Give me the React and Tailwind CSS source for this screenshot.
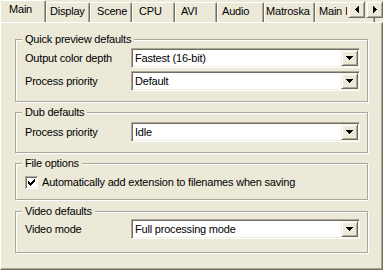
import React from 'react'

const font = "font-['Tahoma','Liberation_Sans',Arial,sans-serif] text-[11px] leading-[13px] tracking-[-0.2px] text-black"

const tabs = [
  { name: 'Main', w: 'w-[46px]', pl: 'pl-[8px]', selected: true },
  { name: 'Display', w: 'w-[44px]', pl: 'pl-[3px]' },
  { name: 'Scene', w: 'w-[42px]', pl: 'pl-[6px]' },
  { name: 'CPU', w: 'w-[43px]', pl: 'pl-[6px]' },
  { name: 'AVI', w: 'w-[42px]', pl: 'pl-[5px]' },
  { name: 'Audio', w: 'w-[47px]', pl: 'pl-[4px]' },
  { name: 'Matroska', w: 'w-[51px]', pl: 'pl-[1px]' },
  { name: 'Main I', w: 'w-[60px]', pl: 'pl-[3px]' },
]

const DownArrow = () => (
  <svg width="7" height="4" viewBox="0 0 7 4" shapeRendering="crispEdges">
    <path d="M0 0h7v1H0z M1 1h5v1H1z M2 2h3v1H2z M3 3h1v1H3z" fill="#000" />
  </svg>
)

const Combo = ({ value }) => (
  <div className="flex h-[20px] w-[229px] items-center border border-t-[#aca899] border-l-[#aca899] border-b-white border-r-white bg-white shadow-[inset_1px_1px_0_#716f64,inset_-1px_-1px_0_#f1efe2]">
    <span className="flex-1 whitespace-nowrap pl-[3px]">{value}</span>
    <div className="mr-[1px] flex h-[16px] w-[17px] items-center justify-center border border-t-[#f1efe2] border-l-[#f1efe2] border-b-[#716f64] border-r-[#716f64] bg-[#ece9d8] shadow-[inset_1px_1px_0_#fff,inset_-1px_-1px_0_#aca899]">
      <DownArrow />
    </div>
  </div>
)

const Group = ({ title, className, children }) => (
  <div className={`relative ml-[14px] w-[353px] border border-[#aca899] shadow-[1px_1px_0_#fff,inset_1px_1px_0_#fff] ${className}`}>
    <span className="absolute -top-[7px] left-[6px] bg-[#ece9d8] px-[3px] whitespace-nowrap">{title}</span>
    {children}
  </div>
)

const Row = ({ label, value }) => (
  <div className="flex items-center">
    <span className="w-[106px] whitespace-nowrap">{label}</span>
    <Combo value={value} />
  </div>
)

const ScrollButton = ({ dir }) => (
  <div className="flex h-[17px] w-[17px] items-center justify-center border border-t-[#f1efe2] border-l-[#f1efe2] border-b-[#716f64] border-r-[#716f64] bg-[#ece9d8] shadow-[inset_1px_1px_0_#fff,inset_-1px_-1px_0_#aca899]">
    <svg width="4" height="7" viewBox="0 0 4 7" shapeRendering="crispEdges">
      {dir === 'left' ? (
        <path d="M3 0h1v7H3z M2 1h1v5H2z M1 2h1v3H1z M0 3h1v1H0z" fill="#000" />
      ) : (
        <path d="M0 0h1v7H0z M1 1h1v5H1z M2 2h1v3H2z M3 3h1v1H3z" fill="#000" />
      )}
    </svg>
  </div>
)

const App = () => {
  return (
    <div className={`h-[270px] w-[383px] overflow-hidden bg-[#ece9d8] ${font}`}>
      {/* tab strip */}
      <div className="relative flex h-[22px] items-end overflow-hidden">
        {tabs.map((t) =>
          t.selected ? (
            <div
              key={t.name}
              className={`relative z-10 -mb-[1px] h-[23px] shrink-0 rounded-t-[2px] border-l border-t border-r border-l-white border-t-white border-r-[#716f64] bg-[#ece9d8] pt-[2px] shadow-[inset_-1px_0_0_#aca899] ${t.w} ${t.pl}`}
            >
              {t.name}
            </div>
          ) : (
            <div
              key={t.name}
              className={`h-[20px] shrink-0 overflow-hidden whitespace-nowrap rounded-t-[2px] border-l border-t border-r border-l-white border-t-white border-r-[#716f64] pt-[2px] shadow-[inset_-1px_0_0_#aca899] ${t.w} ${t.pl}`}
            >
              {t.name}
            </div>
          )
        )}
        <div className="absolute right-0 top-[1px] z-20 flex bg-[#ece9d8] pl-[1px]">
          <ScrollButton dir="left" />
          <div className="w-[1px]" />
          <ScrollButton dir="right" />
        </div>
      </div>

      {/* panel */}
      <div className="h-[248px] w-[383px] border border-l-white border-t-white border-r-[#716f64] border-b-[#716f64] shadow-[inset_-1px_-1px_0_#aca899]">
        <Group title="Quick preview defaults" className="mt-[16px] pl-[9px] pt-[8px] pb-[10px]">
          <div className="flex flex-col gap-[3px]">
            <Row label="Output color depth" value="Fastest (16-bit)" />
            <Row label="Process priority" value="Default" />
          </div>
        </Group>

        <Group title="Dub defaults" className="mt-[10px] pl-[9px] pt-[9px] pb-[10px]">
          <Row label="Process priority" value="Idle" />
        </Group>

        <Group title="File options" className="mt-[10px] pl-[9px] pt-[12px] pb-[10px]">
          <div className="flex h-[13px] items-center gap-[4px]">
            <div className="flex h-[13px] w-[13px] items-center justify-center border border-t-[#aca899] border-l-[#aca899] border-b-white border-r-white bg-white shadow-[inset_1px_1px_0_#716f64,inset_-1px_-1px_0_#f1efe2]">
              <svg width="7" height="7" viewBox="0 0 7 7" shapeRendering="crispEdges">
                <path
                  d="M6 0h1v1H6z M5 1h2v1H5z M0 2h1v1H0z M4 2h3v1H4z M0 3h2v1H0z M3 3h3v1H3z M0 4h5v1H0z M1 5h3v1H1z M2 6h1v1H2z"
                  fill="#000"
                />
              </svg>
            </div>
            <span className="whitespace-nowrap">Automatically add extension to filenames when saving</span>
          </div>
        </Group>

        <Group title="Video defaults" className="mt-[11px] pl-[9px] pt-[7px] pb-[13px]">
          <Row label="Video mode" value="Full processing mode" />
        </Group>
      </div>
    </div>
  )
}

export default App
